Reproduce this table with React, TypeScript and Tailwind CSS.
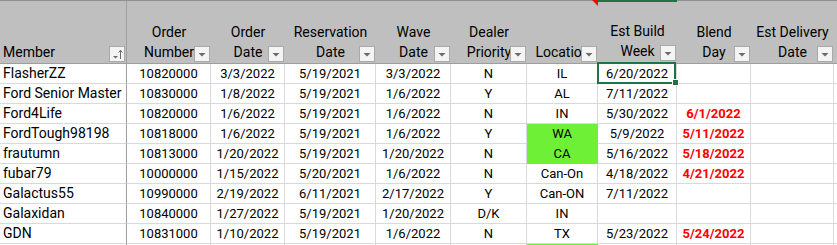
import React from "react";

const COLS = "grid-cols-[127px_84px_74px_91px_75px_76px_71px_79px_74px_83px_1fr]";

type Row = {
  cells: string[];
  green?: boolean;
};

const HEADERS: [string, string][] = [
  ["", "Member"],
  ["Order", "Number"],
  ["Order", "Date"],
  ["Reservation", "Date"],
  ["Wave", "Date"],
  ["Dealer", "Priority"],
  ["", "Location"],
  ["Est Build", "Week"],
  ["Blend", "Day"],
  ["Est Delivery", "Date"],
];

const ROWS: Row[] = [
  { cells: ["FlasherZZ", "10820000", "3/3/2022", "5/19/2021", "3/3/2022", "N", "IL", "6/20/2022", "", ""] },
  { cells: ["Ford Senior Master", "10830000", "1/8/2022", "5/19/2021", "1/6/2022", "Y", "AL", "7/11/2022", "", ""] },
  { cells: ["Ford4Life", "10820000", "1/6/2022", "5/19/2021", "1/6/2022", "N", "IN", "5/30/2022", "6/1/2022", ""] },
  { cells: ["FordTough98198", "10818000", "1/6/2022", "5/19/2021", "1/6/2022", "Y", "WA", "5/9/2022", "5/11/2022", ""], green: true },
  { cells: ["frautumn", "10813000", "1/20/2022", "5/19/2021", "1/20/2022", "N", "CA", "5/16/2022", "5/18/2022", ""], green: true },
  { cells: ["fubar79", "10000000", "1/15/2022", "5/20/2021", "1/6/2022", "N", "Can-On", "4/18/2022", "4/21/2022", ""] },
  { cells: ["Galactus55", "10990000", "2/19/2022", "6/11/2021", "2/17/2022", "Y", "Can-ON", "7/11/2022", "", ""] },
  { cells: ["Galaxidan", "10840000", "1/27/2022", "5/19/2021", "1/20/2022", "D/K", "IN", "", "", ""] },
  { cells: ["GDN", "10831000", "1/10/2022", "5/19/2021", "1/6/2022", "N", "TX", "5/23/2022", "5/24/2022", ""] },
  { cells: ["", "", "", "", "", "", "", "", "", ""], green: true },
];

function FilterButton({ sorted }: { sorted?: boolean }) {
  return (
    <div className="absolute right-[1px] bottom-[1px] w-4 h-4 bg-[#f4f4f4] border border-[#a9a9a9] flex items-center justify-center">
      {sorted ? (
        <svg width="14" height="14" viewBox="0 0 14 14">
          <path d="M3 9h5l-2.5 2.5z" fill="#6b6b6b" />
          <path d="M10.5 12V3.5" stroke="#6b6b6b" strokeWidth="1" />
          <path d="M8.8 5.5l1.7-2.3 1.7 2.3" stroke="#6b6b6b" strokeWidth="1" fill="none" />
        </svg>
      ) : (
        <svg width="14" height="14" viewBox="0 0 14 14">
          <path d="M3.5 6h7l-3.5 3.5z" fill="#6b6b6b" />
        </svg>
      )}
    </div>
  );
}

function HeaderCell({ top, bottom, index }: { top: string; bottom: string; index: number }) {
  const isMember = index === 0;
  return (
    <div
      className={`relative h-[62px] flex flex-col justify-end pb-[1px] text-[14px] leading-[20px] text-black ${
        isMember ? "items-start pl-[3px] border-r border-[#9e9e9e]" : "items-center"
      } ${index === 7 ? "border-t-2 border-[#217346] -mt-[1px]" : ""}`}
    >
      {top && <span className="whitespace-nowrap">{top}</span>}
      <span className="whitespace-nowrap">{bottom}</span>
      {index === 6 && (
        <div className="absolute -top-[1px] right-0 w-0 h-0 border-l-[6px] border-l-transparent border-t-[6px] border-t-[#ff0000]" />
      )}
      <FilterButton sorted={isMember} />
    </div>
  );
}

function DataCell({ value, col, green }: { value: string; col: number; green?: boolean }) {
  const isMember = col === 0;
  const isGreenCell = green && col === 6;
  const isBlend = col === 8;
  return (
    <div
      className={`h-[20px] border-b border-r overflow-hidden whitespace-nowrap leading-[19px] ${
        isMember ? "pl-[3px] text-[14px] border-r-[#9e9e9e] border-b-[#d9d9d9]" : "text-center text-[13px]"
      } ${isGreenCell ? "bg-[#6ef036] border-[#6ef036]" : isMember ? "" : "border-[#d9d9d9]"} ${
        isBlend ? "font-bold text-[#ff0000]" : "text-black"
      }`}
    >
      {value}
    </div>
  );
}

export default function App() {
  return (
    <div className="relative w-[837px] h-[245px] overflow-hidden bg-white font-['Roboto',sans-serif]">
      <div className={`grid ${COLS} bg-[#bfbfbf] border-t border-[#8f8f8f] border-b border-b-[#9e9e9e]`}>
        {HEADERS.map(([top, bottom], i) => (
          <HeaderCell key={i} top={top} bottom={bottom} index={i} />
        ))}
        <div />
      </div>
      {ROWS.map((row, r) => (
        <div key={r} className={`grid ${COLS}`}>
          {row.cells.map((v, c) => (
            <DataCell key={c} value={v} col={c} green={row.green} />
          ))}
          <div className="h-[20px] border-b border-[#d9d9d9]" />
        </div>
      ))}
      <div className="absolute left-[597px] top-[62px] w-[79px] h-[22px] border-2 border-[#217346]" />
      <div className="absolute left-[672px] top-[79px] w-[7px] h-[7px] bg-[#217346] border border-white" />
    </div>
  );
}
